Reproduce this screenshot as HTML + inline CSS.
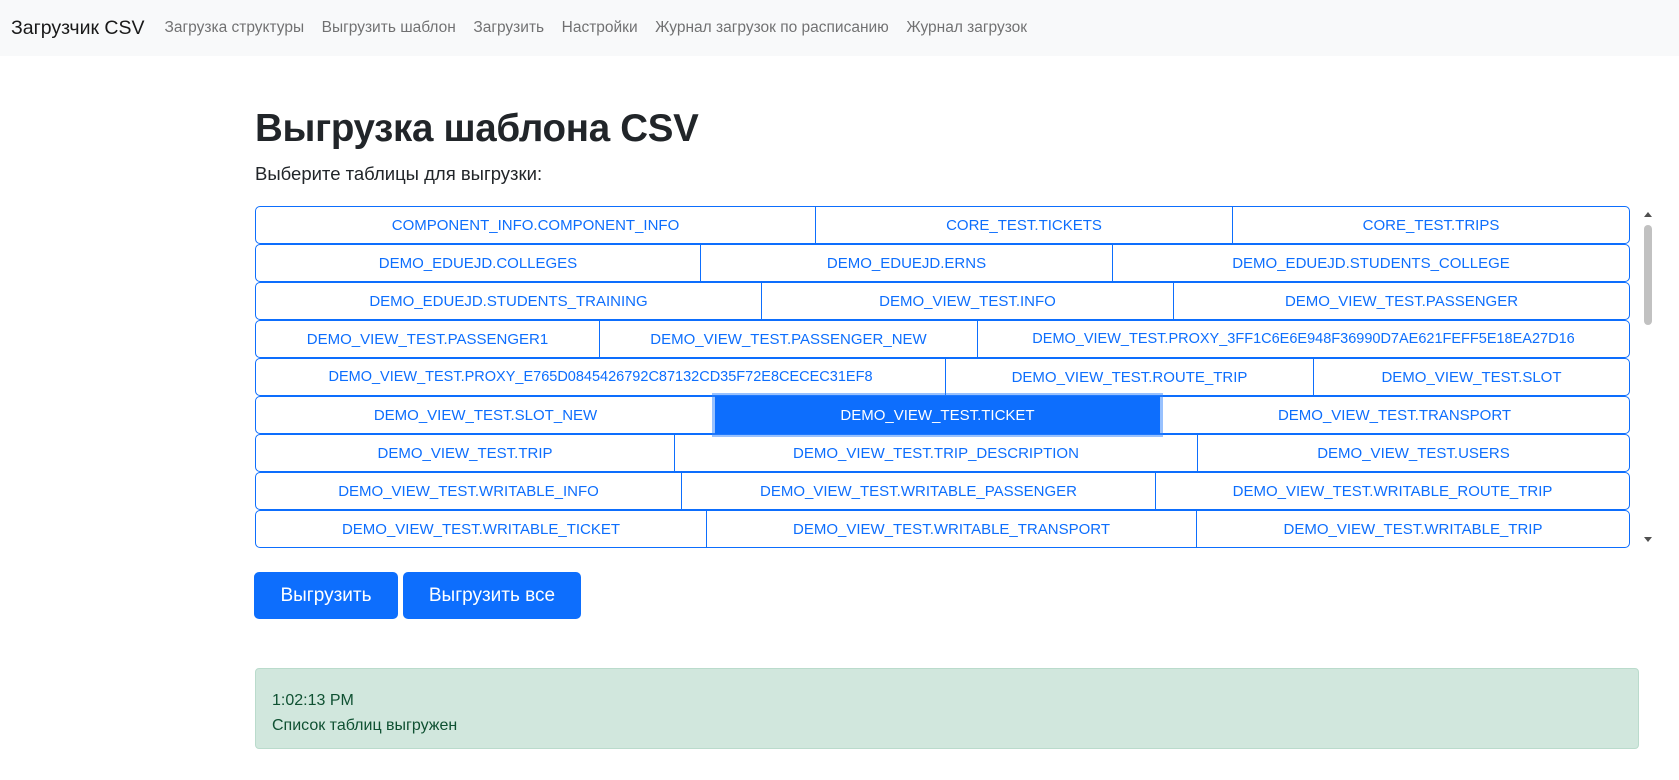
<!DOCTYPE html>
<html><head><meta charset="utf-8"><style>
*{box-sizing:border-box;margin:0;padding:0}
body{width:1679px;height:780px;overflow:hidden;background:#fff;font-family:"Liberation Sans","DejaVu Sans",sans-serif;color:#212529;font-size:16px;position:relative}
.nav{position:absolute;left:0;top:0;width:1679px;height:56px;background:#f8f9fa;display:flex;align-items:center}
.brand{margin-left:11px;font-size:19.5px;color:rgba(0,0,0,.9);margin-right:20px}
.nav a{color:rgba(0,0,0,.55);font-size:15.5px;margin-right:17.5px;text-decoration:none}
h1{position:absolute;left:255px;top:106px;font-size:38.5px;font-weight:bold;line-height:1.2;letter-spacing:-0.3px}
.lead{position:absolute;left:255px;top:163px;font-size:18.5px}
.list{position:absolute;left:255px;top:206px;width:1375px}
.row{display:flex;height:38px}
.b{height:38px;border:1px solid #0d6efd;color:#0d6efd;background:#fff;display:flex;align-items:center;justify-content:center;font-size:15px;white-space:nowrap;overflow:hidden;margin-left:-1px}
.b:first-child{margin-left:0;border-radius:5px 0 0 5px}
.b:last-child{border-radius:0 5px 5px 0}
.sel{background:#0d6efd;color:#fff;box-shadow:0 0 0 3px rgba(49,132,253,.5);position:relative;z-index:2}
.sb{position:absolute;left:1641px;top:206px;width:14px;height:342px}
.thumb{position:absolute;left:3px;top:19px;width:8px;height:100px;background:#c1c1c1;border-radius:4px}
.ar{position:absolute;left:3px;width:0;height:0;border-left:4px solid transparent;border-right:4px solid transparent}
.btn{position:absolute;top:572px;height:47px;background:#0d6efd;color:#fff;border-radius:5px;font-size:19px;display:flex;align-items:center;justify-content:center}
.alert{position:absolute;left:255px;top:668px;width:1384px;height:81px;background:#d1e7dd;border:1px solid #badbcc;border-radius:4px;color:#0f5132;font-size:16px;padding:19px 16px}
.alert div{line-height:25px}
</style></head><body>
<div class="nav"><span class="brand">Загрузчик CSV</span><a>Загрузка структуры</a><a>Выгрузить шаблон</a><a>Загрузить</a><a>Настройки</a><a>Журнал загрузок по расписанию</a><a>Журнал загрузок</a></div>
<h1>Выгрузка шаблона CSV</h1>
<div class="lead">Выберите таблицы для выгрузки:</div>
<div class="list">
<div class="row"><div class="b" style="width:561px">COMPONENT_INFO.COMPONENT_INFO</div><div class="b" style="width:418px">CORE_TEST.TICKETS</div><div class="b" style="width:398px">CORE_TEST.TRIPS</div></div>
<div class="row"><div class="b" style="width:446px">DEMO_EDUEJD.COLLEGES</div><div class="b" style="width:413px">DEMO_EDUEJD.ERNS</div><div class="b" style="width:518px">DEMO_EDUEJD.STUDENTS_COLLEGE</div></div>
<div class="row"><div class="b" style="width:507px">DEMO_EDUEJD.STUDENTS_TRAINING</div><div class="b" style="width:413px">DEMO_VIEW_TEST.INFO</div><div class="b" style="width:457px">DEMO_VIEW_TEST.PASSENGER</div></div>
<div class="row"><div class="b" style="width:345px">DEMO_VIEW_TEST.PASSENGER1</div><div class="b" style="width:379px">DEMO_VIEW_TEST.PASSENGER_NEW</div><div class="b" style="width:653px;font-size:14.5px">DEMO_VIEW_TEST.PROXY_3FF1C6E6E948F36990D7AE621FEFF5E18EA27D16</div></div>
<div class="row"><div class="b" style="width:691px;font-size:14.5px">DEMO_VIEW_TEST.PROXY_E765D0845426792C87132CD35F72E8CECEC31EF8</div><div class="b" style="width:369px">DEMO_VIEW_TEST.ROUTE_TRIP</div><div class="b" style="width:317px">DEMO_VIEW_TEST.SLOT</div></div>
<div class="row"><div class="b" style="width:461px">DEMO_VIEW_TEST.SLOT_NEW</div><div class="b sel" style="width:445px">DEMO_VIEW_TEST.TICKET</div><div class="b" style="width:471px">DEMO_VIEW_TEST.TRANSPORT</div></div>
<div class="row"><div class="b" style="width:420px">DEMO_VIEW_TEST.TRIP</div><div class="b" style="width:524px">DEMO_VIEW_TEST.TRIP_DESCRIPTION</div><div class="b" style="width:433px">DEMO_VIEW_TEST.USERS</div></div>
<div class="row"><div class="b" style="width:427px">DEMO_VIEW_TEST.WRITABLE_INFO</div><div class="b" style="width:475px">DEMO_VIEW_TEST.WRITABLE_PASSENGER</div><div class="b" style="width:475px">DEMO_VIEW_TEST.WRITABLE_ROUTE_TRIP</div></div>
<div class="row"><div class="b" style="width:452px">DEMO_VIEW_TEST.WRITABLE_TICKET</div><div class="b" style="width:491px">DEMO_VIEW_TEST.WRITABLE_TRANSPORT</div><div class="b" style="width:434px">DEMO_VIEW_TEST.WRITABLE_TRIP</div></div>
</div>
<div class="sb"><div class="ar" style="top:6px;border-bottom:5px solid #505050"></div><div class="thumb"></div><div class="ar" style="top:331px;border-top:5px solid #505050"></div></div>
<div class="btn" style="left:254px;width:144px">Выгрузить</div>
<div class="btn" style="left:403px;width:178px">Выгрузить все</div>
<div class="alert"><div>1:02:13 PM</div><div>Список таблиц выгружен</div></div>
</body></html>
